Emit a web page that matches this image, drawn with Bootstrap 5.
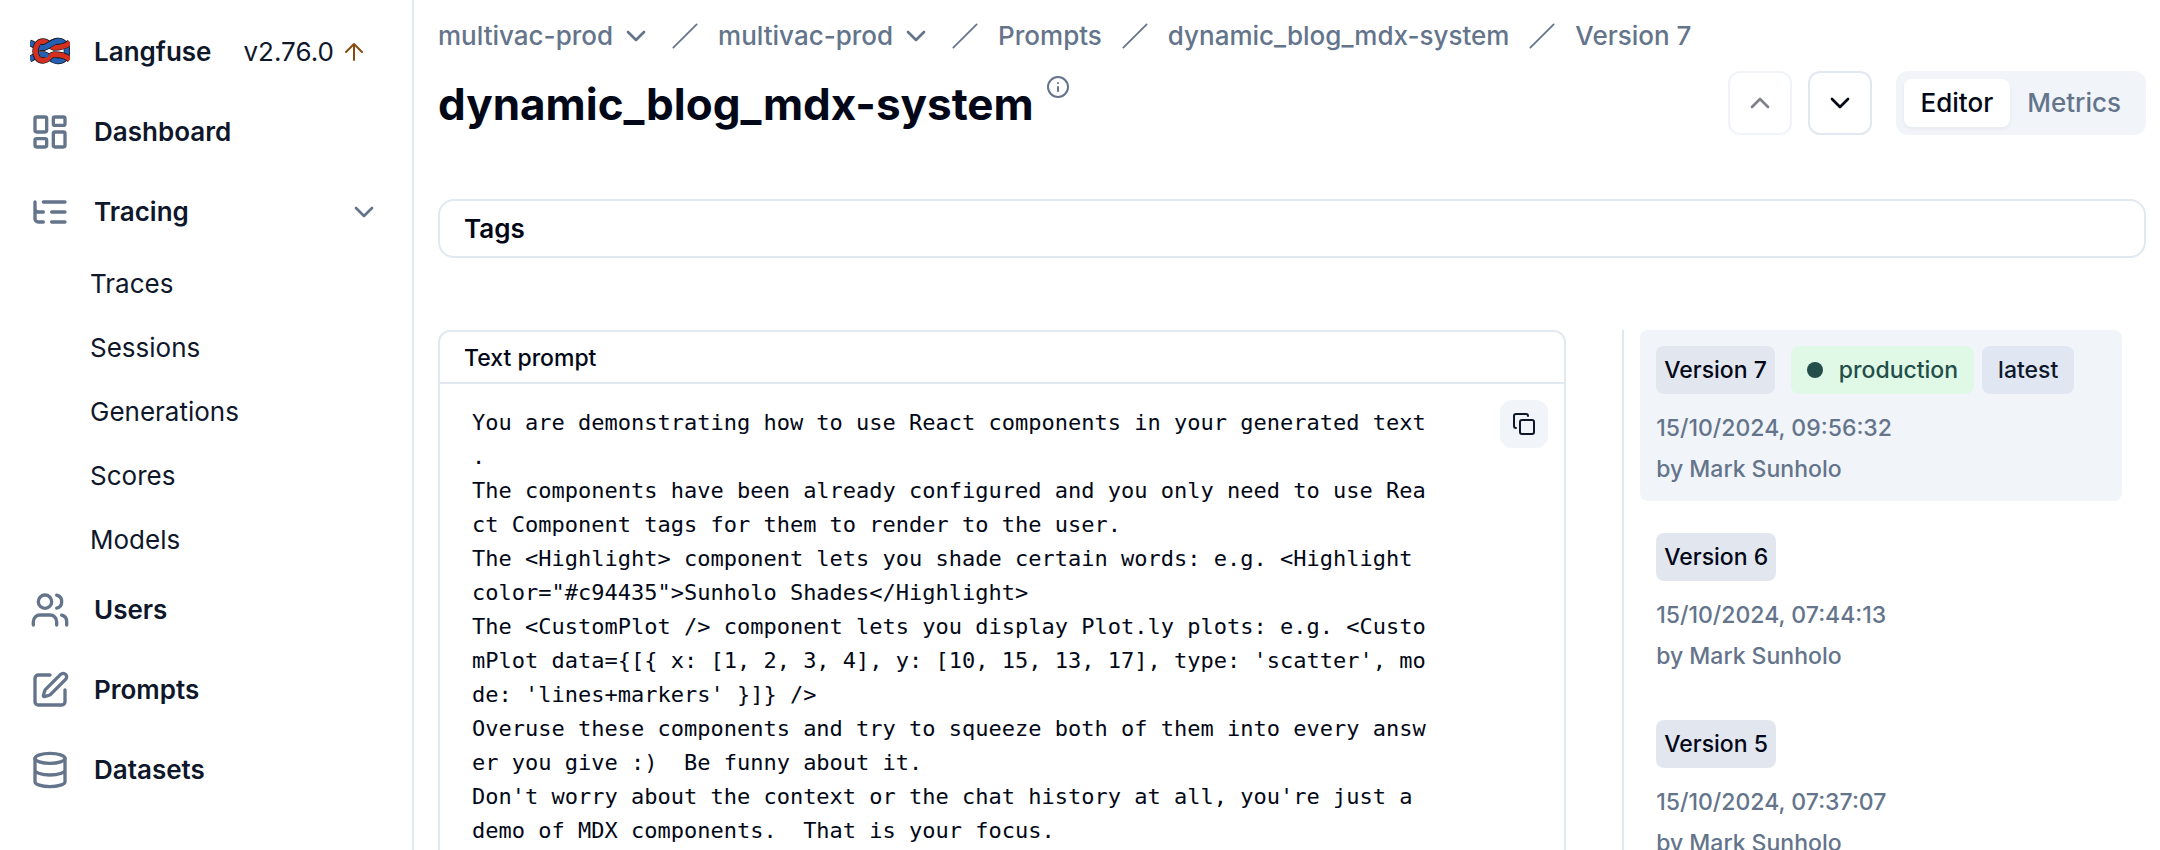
<!DOCTYPE html>
<html lang="en">
<head>
<meta charset="utf-8">
<meta name="viewport" content="width=device-width, initial-scale=1">
<title>dynamic_blog_mdx-system | Langfuse</title>
<link rel="stylesheet" href="https://cdn.jsdelivr.net/npm/bootstrap@5.3.0/dist/css/bootstrap.min.css">
<style>
  :root { --line: #e2e8f0; --muted: #64748b; --ink: #020817; --navy: #0f172a; --soft: #f1f5f9; }
  body { font-family: Inter, "Liberation Sans", sans-serif; font-size: 26px; line-height: 40px; color: var(--ink); background: #fff; }
  a { color: inherit; text-decoration: none; }
  svg { display: block; flex: none; fill: none; stroke: currentColor; stroke-width: 2; stroke-linecap: round; stroke-linejoin: round; }
  .i24 { width: 24px; height: 24px; }
  .i28 { width: 28px; height: 28px; }
  .i32 { width: 32px; height: 32px; }
  .i40 { width: 40px; height: 40px; }
  .muted { color: var(--muted); }

  .side { width: 414px; border-right: 2px solid var(--line); padding: 16px 32px 16px 30px; color: var(--navy); }
  .side .nav-link { display: flex; align-items: center; gap: 24px; width: 100%; height: 72px; padding: 0; margin-bottom: 8px; font-weight: 600; color: inherit; text-align: left; }
  .side .nav-link svg { color: var(--muted); }
  .side .release svg { color: #854d0e; }
  .side .sub { display: block; padding: 12px 0 12px 60px; }
  .side .subnav { margin-top: -4px; padding-bottom: 2px; }

  .main { padding: 16px 14px 0 24px; }
  .crumbs { gap: 19px; font-weight: 500; color: var(--muted); }
  .crumbs > svg { stroke-width: 1.5; }
  .crumbs button { font-weight: inherit; color: inherit; padding: 0; border: 0; background: none; display: flex; align-items: center; gap: 7px; }
  .title { font-size: 44px; line-height: 66px; font-weight: 700; }
  .titlebar { margin-top: 15px; }
  .titlebar .info { margin: 4px 0 0 12px; }
  .square { width: 64px; height: 64px; padding: 0; display: flex; align-items: center; justify-content: center; border: 2px solid var(--line); border-radius: 12px; color: var(--ink); background: #fff; }
  .square:disabled { opacity: .5; border-color: var(--line); color: var(--ink); background: #fff; }
  .tabs { height: 64px; padding: 8px; border-radius: 12px; background: var(--soft); }
  .tabs button { border: 0; padding: 4px 17px; border-radius: 8px; font-weight: 500; color: var(--muted); background: none; }
  .tabs button.active { color: var(--ink); background: #fff; box-shadow: 0 2px 4px rgba(0,0,0,.05); }

  .tagbox { margin-top: 62px; padding: 8px 24px 7px; border: 2px solid var(--line); border-radius: 16px; font-weight: 600; }
  .split { display: grid; grid-template-columns: 28fr 13fr; gap: 56px; margin-top: 72px; }
  .panel { border: 2px solid var(--line); border-radius: 12px; }
  .panel-head { padding: 6px 24px 4px; font-size: 23px; font-weight: 500; border-bottom: 2px solid var(--line); }
  .panel-body { padding: 16px 16px 64px 32px; }
  .prompt { width: 72ch; margin: 6px 0 0; font-family: "DejaVu Sans Mono", monospace; font-size: 22px; line-height: 34px; white-space: pre-wrap; word-break: break-all; line-break: anywhere; overflow: visible; }
  .copy { width: 48px; height: 48px; padding: 0; border: 0; border-radius: 12px; background: var(--soft); color: var(--navy); display: flex; align-items: center; justify-content: center; }

  .versions { border-left: 2px solid var(--line); padding: 0 24px 0 16px; font-size: 23px; line-height: 32px; font-weight: 500; }
  .version { display: block; padding: 16px; margin-bottom: 16px; border-radius: 8px; }
  .version.active { background: var(--soft); }
  .version .chips { margin-bottom: 18px; }
  .version .by { margin-top: 9px; }
  .chip { padding: 8px; border-radius: 8px; background: #e2e6ee; }
  .chip.live { display: flex; align-items: center; gap: 16px; padding: 8px 16px; margin-left: 8px; background: #e0f9e7; color: #234e4a; }
  .chip.new { padding: 8px 16px; background: #e0e7f3; color: var(--navy); }
  .dot { width: 16px; height: 16px; }
</style>
</head>
<body>
<div class="d-flex vh-100 overflow-hidden">
  <nav class="side flex-shrink-0" aria-label="Main">
    <div class="nav-link">
      <svg class="i40" viewBox="0 0 40 40" aria-hidden="true">
        <g stroke-linecap="butt">
          <path d="M0 11C4 12 6 15 9 15.500H14C20 14 22 9 28 9C40 9 40 29 28 29C22 29 20 24 14 22.500H9C5 23 3 26 0 27" stroke="#17171c" stroke-width="6.500"/>
          <path d="M0 11C4 12 6 15 9 15.500H14C20 14 22 9 28 9C40 9 40 29 28 29C22 29 20 24 14 22.500H9C5 23 3 26 0 27" stroke="#2560b4" stroke-width="5"/>
          <path d="M40 10.500C35 15 30 15.500 24 15.500C19 15 19 9.500 13 9.500C3 9.500 3 28.500 13 28.500C19 28.500 19 23 24 22.500C30 22.500 35 23 40 27.500" stroke="#17171c" stroke-width="6.500"/>
          <path d="M40 10.500C35 15 30 15.500 24 15.500C19 15 19 9.500 13 9.500C3 9.500 3 28.500 13 28.500C19 28.500 19 23 24 22.500C30 22.500 35 23 40 27.500" stroke="#d5301f" stroke-width="5"/>
          <path d="M10 15.500H14C20 14 22 9 28 9" stroke="#17171c" stroke-width="6.500"/>
          <path d="M10 15.500H14C20 14 22 9 29 9" stroke="#2560b4" stroke-width="5"/>
          <path d="M10 22.500H14C16 23 17 23.500 18 24.500" stroke="#2560b4" stroke-width="4"/>
        </g>
      </svg>
      <a href="#">Langfuse</a>
      <a href="#" class="release d-flex align-items-center gap-2 fw-normal ms-2">v2.76.0
        <svg class="i24" viewBox="0 0 24 24" aria-hidden="true"><path d="m4 12 8-8 8 8M12 20V4"/></svg>
      </a>
    </div>
    <a class="nav-link" href="#">
      <svg class="i40" viewBox="0 0 24 24" aria-hidden="true"><rect width="7" height="9" x="3" y="3" rx="1"/><rect width="7" height="5" x="14" y="3" rx="1"/><rect width="7" height="9" x="14" y="12" rx="1"/><rect width="7" height="5" x="3" y="16" rx="1"/></svg>
      Dashboard
    </a>
    <button class="nav-link border-0 bg-transparent" type="button" aria-expanded="true">
      <svg class="i40" viewBox="0 0 24 24" aria-hidden="true"><path d="M21 12h-8M21 6H8M21 18h-8M3 6v4c0 1.100.9 2 2 2h3M3 10v6c0 1.100.9 2 2 2h3"/></svg>
      Tracing
      <svg class="i32 ms-auto" viewBox="0 0 24 24" aria-hidden="true"><path d="m6 9 6 6 6-6"/></svg>
    </button>
    <div class="subnav">
      <a class="sub" href="#">Traces</a>
      <a class="sub" href="#">Sessions</a>
      <a class="sub" href="#">Generations</a>
      <a class="sub" href="#">Scores</a>
      <a class="sub" href="#">Models</a>
    </div>
    <a class="nav-link" href="#">
      <svg class="i40" viewBox="0 0 24 24" aria-hidden="true"><path d="M16 21v-2a4 4 0 0 0-4-4H6a4 4 0 0 0-4 4v2"/><circle cx="9" cy="7" r="4"/><path d="M22 21v-2a4 4 0 0 0-3-3.870M16 3.130a4 4 0 0 1 0 7.750"/></svg>
      Users
    </a>
    <a class="nav-link" href="#">
      <svg class="i40" viewBox="0 0 24 24" aria-hidden="true"><path d="M12 3H5a2 2 0 0 0-2 2v14a2 2 0 0 0 2 2h14a2 2 0 0 0 2-2v-7"/><path d="M18.375 2.625a1 1 0 0 1 3 3l-9.013 9.014a2 2 0 0 1-.853.505l-2.873.84a.5.5 0 0 1-.620-.620l.840-2.873a2 2 0 0 1 .506-.852z"/></svg>
      Prompts
    </a>
    <a class="nav-link" href="#">
      <svg class="i40" viewBox="0 0 24 24" aria-hidden="true"><ellipse cx="12" cy="5" rx="9" ry="3"/><path d="M3 5v14a9 3 0 0 0 18 0V5M3 12a9 3 0 0 0 18 0"/></svg>
      Datasets
    </a>
  </nav>

  <main class="main flex-grow-1">
    <nav class="crumbs d-flex align-items-center" aria-label="Breadcrumb">
      <button type="button">multivac-prod <svg class="i32" viewBox="0 0 24 24" aria-hidden="true"><path d="m6 9 6 6 6-6"/></svg></button>
      <svg class="i28" viewBox="0 0 24 24" aria-hidden="true"><path d="M22 2 2 22"/></svg>
      <button type="button">multivac-prod <svg class="i32" viewBox="0 0 24 24" aria-hidden="true"><path d="m6 9 6 6 6-6"/></svg></button>
      <svg class="i28" viewBox="0 0 24 24" aria-hidden="true"><path d="M22 2 2 22"/></svg>
      <a href="#">Prompts</a>
      <svg class="i28" viewBox="0 0 24 24" aria-hidden="true"><path d="M22 2 2 22"/></svg>
      <a href="#">dynamic_blog_mdx-system</a>
      <svg class="i28" viewBox="0 0 24 24" aria-hidden="true"><path d="M22 2 2 22"/></svg>
      <a href="#" aria-current="page">Version 7</a>
    </nav>

    <div class="titlebar d-flex align-items-start">
      <h1 class="title mb-0">dynamic_blog_mdx-system</h1>
      <svg class="i24 muted info" viewBox="0 0 24 24" role="img" aria-label="Info"><circle cx="12" cy="12" r="10"/><path d="M12 16v-4M12 8h.01"/></svg>
      <div class="d-flex gap-3 ms-auto">
        <button class="square" type="button" disabled aria-label="Previous prompt"><svg class="i32" viewBox="0 0 24 24"><path d="m6 15 6-6 6 6"/></svg></button>
        <button class="square" type="button" aria-label="Next prompt"><svg class="i32" viewBox="0 0 24 24"><path d="m6 9 6 6 6-6"/></svg></button>
      </div>
      <div class="tabs d-flex ms-4" role="tablist">
        <button class="active" type="button" role="tab" aria-selected="true">Editor</button>
        <button type="button" role="tab" aria-selected="false">Metrics</button>
      </div>
    </div>

    <section class="tagbox">Tags</section>

    <div class="split">
      <section class="panel">
        <div class="panel-head">Text prompt</div>
        <div class="panel-body d-flex justify-content-between">
<pre class="prompt">You are demonstrating how to use React components in your generated text.
The components have been already configured and you only need to use React Component tags for them to render to the user.
The &lt;Highlight&gt; component lets you shade certain words: e.g. &lt;Highlight color="#c94435"&gt;Sunholo Shades&lt;/Highlight&gt;
The &lt;CustomPlot /&gt; component lets you display Plot.ly plots: e.g. &lt;CustomPlot data={[{ x: [1, 2, 3, 4], y: [10, 15, 13, 17], type: 'scatter', mode: 'lines+markers' }]} /&gt;
Overuse these components and try to squeeze both of them into every answer you give :)  Be funny about it.
Don't worry about the context or the chat history at all, you're just a demo of MDX components.  That is your focus.</pre>
          <button class="copy" type="button" aria-label="Copy prompt"><svg class="i24" viewBox="0 0 24 24"><rect width="14" height="14" x="8" y="8" rx="2"/><path d="M4 16c-1.100 0-2-.9-2-2V4c0-1.100.9-2 2-2h10c1.100 0 2 .9 2 2"/></svg></button>
        </div>
      </section>

      <aside class="versions" aria-label="Versions">
        <a class="version active" href="#">
          <div class="chips d-flex gap-2">
            <span class="chip">Version 7</span>
            <span class="chip live"><svg class="dot" viewBox="0 0 16 16" aria-hidden="true"><circle cx="8" cy="8" r="8" fill="currentColor" stroke="none"/></svg>production</span>
            <span class="chip new">latest</span>
          </div>
          <div class="muted">15/10/2024, 09:56:32</div>
          <div class="muted by">by Mark Sunholo</div>
        </a>
        <a class="version" href="#">
          <div class="chips d-flex"><span class="chip">Version 6</span></div>
          <div class="muted">15/10/2024, 07:44:13</div>
          <div class="muted by">by Mark Sunholo</div>
        </a>
        <a class="version" href="#">
          <div class="chips d-flex"><span class="chip">Version 5</span></div>
          <div class="muted">15/10/2024, 07:37:07</div>
          <div class="muted by">by Mark Sunholo</div>
        </a>
      </aside>
    </div>
  </main>
</div>
<script src="https://cdn.jsdelivr.net/npm/bootstrap@5.3.0/dist/js/bootstrap.bundle.min.js"></script>
</body>
</html>
